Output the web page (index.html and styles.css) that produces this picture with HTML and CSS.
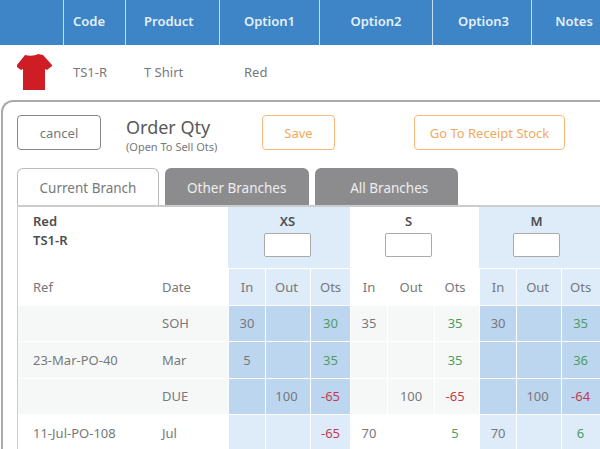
FILE: index.html
```html
<!DOCTYPE html>
<html lang="en">
<head>
    <meta charset="UTF-8">
    <title>Order Qty</title>
    <link rel="stylesheet" href="styles.css">
</head>
<body>
    <div class="top-bar">
        <div class="top-cell"></div>
        <div class="top-cell pad-code">Code</div>
        <div class="top-cell pad-product">Product</div>
        <div class="top-cell centered">Option1</div>
        <div class="top-cell centered">Option2</div>
        <div class="top-cell centered pad-option3">Option3</div>
        <div class="top-cell centered pad-notes">Notes</div>
    </div>
    <div class="product-row">
        <div class="product-pic">
            <svg width="37" height="38" viewBox="0 0 37 38">
                <path d="M9 1 C13 2 19 2 22 0 L27 1 L36 11 L36 12 L31 16 L29 15 L29 36 L7 36 L7 15 L5 16 L1 13 L1 11 Z" fill="#cf1d25"/>
            </svg>
        </div>
        <div class="pad-code">TS1-R</div>
        <div class="pad-product">T Shirt</div>
        <div class="pad-option">Red</div>
    </div>
    <div class="panel">
        <div class="panel-head">
            <button class="btn btn-cancel">cancel</button>
            <div class="panel-title">
                <h1>Order Qty</h1>
                <p>(Open To Sell Ots)</p>
            </div>
            <button class="btn btn-save">Save</button>
            <button class="btn btn-stock">Go To Receipt Stock</button>
        </div>
        <div class="tabs">
            <div class="tab active">Current Branch</div>
            <div class="tab">Other Branches</div>
            <div class="tab">All Branches</div>
        </div>
        <table class="grid">
            <colgroup>
                <col class="c-ref"><col class="c-date">
                <col class="c-in"><col class="c-out"><col class="c-ots">
                <col class="c-in"><col class="c-out-s"><col class="c-ots-s">
                <col class="c-in"><col class="c-out"><col class="c-ots">
            </colgroup>
            <thead>
                <tr class="size-row">
                    <th colspan="2" class="item-name">Red<br>TS1-R</th>
                    <th colspan="3" class="light size-xs">XS<input type="text" class="qty"></th>
                    <th colspan="3" class="size-s">S<input type="text" class="qty"></th>
                    <th colspan="3" class="light size-m">M<input type="text" class="qty"></th>
                </tr>
                <tr class="sub-row">
                    <td class="ref">Ref</td><td>Date</td>
                    <td class="light">In</td><td class="light">Out</td><td class="light">Ots</td>
                    <td>In</td><td>Out</td><td>Ots</td>
                    <td class="light">In</td><td class="light">Out</td><td class="light">Ots</td>
                </tr>
            </thead>
            <tbody>
                <tr class="shaded">
                    <td class="ref"></td><td>SOH</td>
                    <td class="dark">30</td><td class="dark"></td><td class="dark pos">30</td>
                    <td>35</td><td></td><td class="pos">35</td>
                    <td class="dark">30</td><td class="dark"></td><td class="dark pos">35</td>
                </tr>
                <tr class="shaded">
                    <td class="ref">23-Mar-PO-40</td><td>Mar</td>
                    <td class="dark">5</td><td class="dark"></td><td class="dark pos">35</td>
                    <td></td><td></td><td class="pos">35</td>
                    <td class="dark"></td><td class="dark"></td><td class="dark pos">36</td>
                </tr>
                <tr class="shaded">
                    <td class="ref"></td><td>DUE</td>
                    <td class="dark"></td><td class="dark">100</td><td class="dark neg">-65</td>
                    <td></td><td>100</td><td class="neg">-65</td>
                    <td class="dark"></td><td class="dark">100</td><td class="dark neg">-64</td>
                </tr>
                <tr>
                    <td class="ref">11-Jul-PO-108</td><td>Jul</td>
                    <td class="light"></td><td class="light"></td><td class="light neg">-65</td>
                    <td>70</td><td></td><td class="pos">5</td>
                    <td class="light">70</td><td class="light"></td><td class="light pos">6</td>
                </tr>
            </tbody>
        </table>
    </div>
</body>
</html>
```

FILE: styles.css
```css
html, body {
    margin: 0;
    height: 449px;
    overflow: hidden;
    background: #fff;
}

body {
    font-family: "Noto Sans", "Open Sans", sans-serif;
    font-size: 13px;
    color: #77787b;
}

.top-bar {
    display: grid;
    grid-template-columns: 64px 62px 94px 100px 113px 99px 68px;
    height: 45px;
    background: #3d85c6;
    color: #e4eff9;
    font-weight: 600;
}

.top-cell {
    display: flex;
    align-items: center;
    border-right: 1.5px solid #c5dcf0;
    box-sizing: border-box;
    padding-bottom: 3px;
}

.top-cell:last-child {
    border-right: 0;
}

.centered {
    justify-content: center;
}

.pad-code {
    padding-left: 9px;
}

.pad-product {
    padding-left: 18px;
}

.pad-option {
    padding-left: 24px;
}

.pad-option3 {
    padding-left: 3px;
}

.pad-notes {
    padding-left: 16px;
}

.product-row {
    display: grid;
    grid-template-columns: 64px 62px 94px 100px;
    align-items: center;
    height: 55px;
    padding-bottom: 2px;
    box-sizing: border-box;
}

.product-pic {
    padding: 7px 0 0 16px;
}

.panel {
    width: 599px;
    height: 349px;
    box-sizing: border-box;
    margin-left: 1px;
    padding: 13px 0 0 14px;
    border: 2px solid #aaa;
    border-right: 0;
    border-bottom: 0;
    border-radius: 12px 0 0 0;
    overflow: hidden;
}

.panel-head {
    display: flex;
    align-items: flex-start;
    height: 53px;
}

.btn {
    height: 35px;
    box-sizing: border-box;
    background: #fff;
    border-radius: 4px;
    font-family: inherit;
    font-size: 13px;
    padding: 0;
}

.btn-cancel {
    width: 84px;
    border: 1.5px solid #888;
    color: #77787b;
}

.btn-save, .btn-stock {
    border: 1.5px solid #f6b878;
    color: #f2a95f;
}

.btn-save {
    width: 73px;
}

.btn-stock {
    width: 151px;
    margin-left: 79px;
}

.panel-title {
    width: 136px;
    margin-left: 25px;
}

.panel-title h1 {
    margin: 0;
    font-size: 18px;
    font-weight: 400;
    line-height: 24px;
    color: #58595b;
}

.panel-title p {
    margin: 0;
    padding-top: 1px;
    font-size: 11px;
    line-height: 14px;
}

.tabs {
    display: flex;
    gap: 6px;
    height: 37px;
}

.tab {
    width: 143.5px;
    box-sizing: border-box;
    padding-top: 2px;
    display: flex;
    align-items: center;
    justify-content: center;
    background: #8c8c8e;
    color: #eee;
    font-size: 13.5px;
    border-radius: 6px 6px 0 0;
}

.tab:last-child {
    padding-left: 6px;
}

.tab.active {
    width: 142px;
    background: #fff;
    color: #77787b;
    border: 1px solid #bbb;
    border-bottom: 0;
}

.grid {
    table-layout: fixed;
    border-collapse: separate;
    border-spacing: 0;
    width: 582px;
    border-top: 2px solid #ccc;
    border-left: 1px solid #ccc;
}

.c-ref { width: 144px; }
.c-date { width: 66px; }
.c-in { width: 37px; }
.c-out { width: 45px; }
.c-ots { width: 40px; }
.c-out-s { width: 47px; }
.c-ots-s { width: 45px; }

.grid td, .grid th {
    padding: 0;
    text-align: center;
    box-sizing: border-box;
}

.grid tbody td, .sub-row td {
    height: 36.5px;
    border-left: 1.5px solid #fff;
    border-bottom: 1px solid #fff;
}

.sub-row td {
    padding-top: 1px;
}

.grid td:nth-child(2) {
    text-align: left;
    border-left: 0;
}

/* nudge the Out and Ots figures to where they sit in each size group */
.grid td:nth-child(4), .grid td:nth-child(10) {
    padding-right: 3px;
}

.grid td:nth-child(8) {
    padding-right: 4px;
}

.grid td:nth-child(11) {
    padding-right: 2px;
}

.grid .ref {
    text-align: left;
    padding-left: 15px;
    border-left: 0;
}

.size-row th {
    height: 62px;
    vertical-align: top;
    padding-top: 5px;
    font-size: 13px;
    font-weight: 600;
    color: #4d4e50;
    border-bottom: 1px solid #fff;
}

.grid .size-xs {
    padding-right: 3px;
}

.grid .size-s {
    padding-right: 12px;
}

.grid .size-m {
    padding-right: 7px;
}

.grid .item-name {
    text-align: left;
    padding-left: 15px;
    line-height: 19px;
}

.qty {
    display: block;
    width: 47px;
    height: 24px;
    box-sizing: border-box;
    margin: 3px auto 0;
    background: #fff;
    border: 1px solid #aaa;
    border-radius: 2px;
}

.grid .light {
    background: #deebf8;
}

.grid .dark {
    background: #bdd6ef;
}

.shaded td {
    background: #f6f8f8;
}

.grid .pos {
    color: #4e9c5f;
}

.grid .neg {
    color: #c43a50;
}
```
